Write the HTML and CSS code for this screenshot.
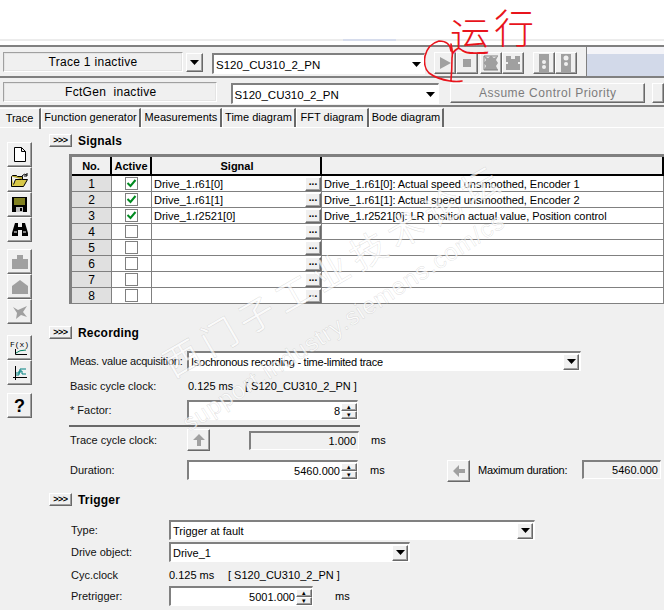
FILE: index.html
```html
<!DOCTYPE html>
<html lang="en">
<head>
<meta charset="utf-8">
<title>Trace</title>
<link rel="stylesheet" href="styles.css">
</head>
<body>
<div class="page">
  <div class="blank"></div>
  <div class="strip"></div>

  <div class="bar bar-one">
    <div class="status status-trace">Trace 1 inactive</div>
    <div class="btn drop-alone"><svg width="9" height="5" viewBox="0 0 9 5"><path d="M0 0h9L4.5 5z" fill="#000"/></svg></div>
    <div class="field combo combo-top"><span class="grow">S120_CU310_2_PN</span><span class="plain-arrow"><svg width="9" height="5" viewBox="0 0 9 5"><path d="M0 0h9L4.5 5z" fill="#000"/></svg></span></div>
    <div class="tools">
      <div class="btn tool"><svg width="14" height="14" viewBox="0 0 14 14"><path d="M2 1l11 6-11 6z" fill="#a0a0a0"/></svg></div>
      <div class="btn tool"><svg width="14" height="14" viewBox="0 0 14 14"><rect x="3" y="3" width="8" height="8" fill="#a0a0a0"/></svg></div>
      <div class="btn tool tool-gap"><svg width="16" height="16" viewBox="0 0 16 16"><path d="M1 1l4 2 3-2 3 2 4-2-2 4 2 3-2 3 2 4H1l2-4-2-3 2-3z" fill="#a0a0a0"/><path d="M1 1h14M1 15h14M1 1v14" stroke="#808080" fill="none"/></svg></div>
      <div class="btn tool"><svg width="16" height="16" viewBox="0 0 16 16"><path d="M1 1h14v14H1z" fill="#a0a0a0"/><path d="M6 1h4v3H6zM1 7h2v2H1zM13 7h2v2h-2z" fill="#f0f0f0"/></svg></div>
      <div class="btn tool light-a"><svg width="12" height="18" viewBox="0 0 12 18"><rect x="1" width="10" height="18" fill="#a0a0a0"/><circle cx="6" cy="8" r="2" fill="#f0f0f0"/><circle cx="6" cy="13" r="2" fill="#f0f0f0"/></svg></div>
      <div class="btn tool"><svg width="12" height="18" viewBox="0 0 12 18"><rect x="1" width="10" height="18" fill="#a0a0a0"/><circle cx="6" cy="4" r="2.500" fill="#f0f0f0"/><circle cx="6" cy="10" r="2" fill="#f0f0f0"/></svg></div>
    </div>
    <div class="bar-fill"></div>
  </div>

  <div class="bar bar-two">
    <div class="status status-fct">FctGen&nbsp; inactive</div>
    <div class="field combo combo-fct"><span class="grow">S120_CU310_2_PN</span><span class="plain-arrow"><svg width="9" height="5" viewBox="0 0 9 5"><path d="M0 0h9L4.5 5z" fill="#000"/></svg></span></div>
    <div class="btn assume">Assume Control Priority</div>
    <div class="btn assume-edge"></div>
  </div>

  <div class="tabs">
    <div class="tab tab-on">Trace</div>
    <div class="tab tab-fg">Function generator</div>
    <div class="tab tab-me">Measurements</div>
    <div class="tab tab-ti">Time diagram</div>
    <div class="tab tab-ff">FFT diagram</div>
    <div class="tab tab-bo">Bode diagram</div>
  </div>

  <div class="main">
    <aside class="side">
      <div class="btn side-btn"><svg width="14" height="15" viewBox="0 0 14 15"><path d="M1.500.5h7l4 4v10h-11zM8.500.5v4h4" fill="#fff" stroke="#000"/></svg></div>
      <div class="btn side-btn"><svg width="18" height="14" viewBox="0 0 18 14"><path d="M.5 3.500v10h12l4-7h-12l-2 5" fill="#d8c848" stroke="#000"/><path d="M.5 3.500l1-1h4l1 1h5v3" fill="#b8a830" stroke="#000"/><path d="M11 3q2-3 5-1M16 0v3h-3" fill="none" stroke="#000"/></svg></div>
      <div class="btn side-btn"><svg width="15" height="15" viewBox="0 0 15 15"><rect width="15" height="15" fill="#000"/><rect x="2" y="1" width="11" height="7" fill="#808020"/><rect x="4" y="10" width="7" height="5" fill="#c0c0c0"/><rect x="8" y="11" width="2" height="3" fill="#000"/></svg></div>
      <div class="btn side-btn"><svg width="16" height="13" viewBox="0 0 16 13"><path d="M3 0h3v4h4V0h3l3 10v3h-6V7H6v6H0v-3z" fill="#000"/><path d="M2 9h3M11 9h3" stroke="#fff"/></svg></div>
      <div class="side-gap-a"></div>
      <div class="btn side-btn"><svg width="16" height="14" viewBox="0 0 16 14"><path d="M5 0h6v4h5v10H0V4h5z" fill="#a0a0a0"/></svg></div>
      <div class="btn side-btn"><svg width="16" height="14" viewBox="0 0 16 14"><path d="M8 0l8 6v8H0V6z" fill="#a0a0a0"/></svg></div>
      <div class="btn side-btn"><svg width="16" height="14" viewBox="0 0 16 14"><path d="M1 2l5 3 9-4-4 6 4 5-6-2-5 4 1-6z" fill="#a0a0a0"/></svg></div>
      <div class="side-gap-b"></div>
      <div class="btn side-btn fx"><span class="fx-text">F(x)</span><svg width="14" height="6" viewBox="0 0 14 6"><path d="M2.500 0V5.500H14" fill="none" stroke="#000"/><path d="M3 4q3-3 10-3" fill="none" stroke="#008060"/></svg></div>
      <div class="btn side-btn"><svg width="14" height="14" viewBox="0 0 14 14"><path d="M2.500 0v14M0 11.500h14" stroke="#000" fill="none"/><path d="M3 9h3V5h3v3h4M3 7h4V3h6" stroke="#008080" fill="none"/></svg></div>
      <div class="side-gap-c"></div>
      <div class="btn side-btn help">?</div>
    </aside>

    <div class="content">
      <div class="sec-head sec-signals"><div class="btn more">&gt;&gt;&gt;</div><span class="sec-title">Signals</span></div>
      <div class="sig-table">
        <div class="sig-row sig-header">
          <div class="c-no">No.</div><div class="c-act">Active</div><div class="c-sig">Signal</div><div class="c-desc"></div>
        </div>
        <div class="sig-row"><div class="c-no">1</div><div class="c-act"><span class="check"><svg width="11" height="9" viewBox="0 0 11 9"><path d="M1.500 4l3 3 5-6" fill="none" stroke="#008a20" stroke-width="2"/></svg></span></div><div class="c-sig"><span class="grow">Drive_1.r61[0]</span><span class="btn dots">...</span></div><div class="c-desc">Drive_1.r61[0]: Actual speed unsmoothed, Encoder 1</div></div>
        <div class="sig-row"><div class="c-no">2</div><div class="c-act"><span class="check"><svg width="11" height="9" viewBox="0 0 11 9"><path d="M1.500 4l3 3 5-6" fill="none" stroke="#008a20" stroke-width="2"/></svg></span></div><div class="c-sig"><span class="grow">Drive_1.r61[1]</span><span class="btn dots">...</span></div><div class="c-desc">Drive_1.r61[1]: Actual speed unsmoothed, Encoder 2</div></div>
        <div class="sig-row"><div class="c-no">3</div><div class="c-act"><span class="check"><svg width="11" height="9" viewBox="0 0 11 9"><path d="M1.500 4l3 3 5-6" fill="none" stroke="#008a20" stroke-width="2"/></svg></span></div><div class="c-sig"><span class="grow">Drive_1.r2521[0]</span><span class="btn dots">...</span></div><div class="c-desc">Drive_1.r2521[0]: LR position actual value, Position control</div></div>
        <div class="sig-row"><div class="c-no">4</div><div class="c-act"><span class="check"></span></div><div class="c-sig"><span class="grow"></span><span class="btn dots">...</span></div><div class="c-desc"></div></div>
        <div class="sig-row"><div class="c-no">5</div><div class="c-act"><span class="check"></span></div><div class="c-sig"><span class="grow"></span><span class="btn dots">...</span></div><div class="c-desc"></div></div>
        <div class="sig-row"><div class="c-no">6</div><div class="c-act"><span class="check"></span></div><div class="c-sig"><span class="grow"></span><span class="btn dots">...</span></div><div class="c-desc"></div></div>
        <div class="sig-row"><div class="c-no">7</div><div class="c-act"><span class="check"></span></div><div class="c-sig"><span class="grow"></span><span class="btn dots">...</span></div><div class="c-desc"></div></div>
        <div class="sig-row"><div class="c-no">8</div><div class="c-act"><span class="check"></span></div><div class="c-sig"><span class="grow"></span><span class="btn dots">...</span></div><div class="c-desc"></div></div>
      </div>

      <div class="sec-head sec-recording"><div class="btn more">&gt;&gt;&gt;</div><span class="sec-title">Recording</span></div>

      <div class="form-row rec r-meas"><label class="lab lab-rec lab-meas">Meas. value acquisition:</label>
        <div class="field combo w-meas"><span class="grow tight">Isochronous recording - time-limited trace</span><span class="btn arrow"><svg width="9" height="5" viewBox="0 0 9 5"><path d="M0 0h9L4.5 5z" fill="#000"/></svg></span></div>
      </div>
      <div class="form-row rec r-basic"><label class="lab lab-rec">Basic cycle clock:</label><span class="val-ms">0.125 ms</span><span>[ S120_CU310_2_PN ]</span></div>
      <div class="form-row rec r-factor"><label class="lab lab-rec">* Factor:</label>
        <div class="field spin w-spin"><span class="grow num">8</span><span class="spinner"><span class="btn sp">▴</span><span class="btn sp">▾</span></span></div>
      </div>
      <div class="divider"></div>
      <div class="form-row rec r-trace"><label class="lab lab-rec">Trace cycle clock:</label>
        <div class="btn arrow-btn"><svg width="12" height="12" viewBox="0 0 12 12"><path d="M6 0l6 6H8v6H4V6H0z" fill="#a0a0a0"/></svg></div>
        <div class="field ro w-trace">1.000</div><span class="unit unit-trace">ms</span>
      </div>
      <div class="form-row rec r-dur"><label class="lab lab-rec">Duration:</label>
        <div class="field spin w-spin"><span class="grow num">5460.000</span><span class="spinner"><span class="btn sp">▴</span><span class="btn sp">▾</span></span></div>
        <span class="unit unit-dur">ms</span>
        <div class="btn arrow-btn arrow-left"><svg width="12" height="12" viewBox="0 0 12 12"><path d="M0 6l6-6v4h6v4H6v4z" fill="#a0a0a0"/></svg></div>
        <span class="max-lab">Maximum duration:</span>
        <div class="field ro w-max">5460.000</div>
      </div>

      <div class="sec-head sec-trigger"><div class="btn more">&gt;&gt;&gt;</div><span class="sec-title">Trigger</span></div>
      <div class="form-row trg r-type"><label class="lab lab-trg">Type:</label>
        <div class="field combo w-type"><span class="grow">Trigger at fault</span><span class="btn arrow"><svg width="9" height="5" viewBox="0 0 9 5"><path d="M0 0h9L4.5 5z" fill="#000"/></svg></span></div>
      </div>
      <div class="form-row trg r-drive"><label class="lab lab-trg">Drive object:</label>
        <div class="field combo w-drive"><span class="grow">Drive_1</span><span class="btn arrow"><svg width="9" height="5" viewBox="0 0 9 5"><path d="M0 0h9L4.5 5z" fill="#000"/></svg></span></div>
      </div>
      <div class="form-row trg r-cyc"><label class="lab lab-trg">Cyc.clock</label><span class="val-ms-t">0.125 ms</span><span>[ S120_CU310_2_PN ]</span></div>
      <div class="form-row trg r-pre"><label class="lab lab-trg">Pretrigger:</label>
        <div class="field spin w-pre"><span class="grow num">5001.000</span><span class="spinner"><span class="btn sp">▴</span><span class="btn sp">▾</span></span></div>
        <span class="unit unit-pre">ms</span>
      </div>
    </div>
  </div>

  <div class="mark mark-cn">西门子工业技术论坛</div>
  <div class="mark mark-en">support.industry.siemens.com/cs</div>

  <div class="note"><span class="note-a">运</span><span class="note-b">行</span></div>
  <svg class="ring" width="50" height="50" viewBox="0 0 50 50"><path d="M27 11Q26 1 15 1 4 4 1 16-1 27 5 33q8 6 21 8 7 1 12 0M27 4q2 8 1 14 0 12-1 22" fill="none" stroke="#e8141c" stroke-width="1.600" stroke-linecap="round"/></svg>
</div>
</body>
</html>
```

FILE: styles.css
```css
* { box-sizing: border-box; }
html, body { margin: 0; padding: 0; }
body { background: #f0f0f0; }
.page {
  position: relative;
  width: 664px;
  height: 610px;
  overflow: hidden;
  background: #f0f0f0;
  color: #000;
  font: 11px/14px "Liberation Sans", Arial, sans-serif;
}
.blank { height: 39px; background: #fff; }
.strip {
  height: 6px;
  background:
    linear-gradient(90deg, transparent 343px, #d6dcec 343px, #d6dcec 396px, transparent 396px) 0 0 / 100% 2px no-repeat,
    linear-gradient(#ececec 0 2px, #fff 2px);
}

.bar { display: flex; align-items: flex-start; border-top: 2px solid #808080; }
.bar-one { height: 31px; }
.bar-two { height: 29px; }

.btn {
  display: flex;
  align-items: center;
  justify-content: center;
  background: #f0f0f0;
  border: 1px solid;
  border-color: #fff #696969 #696969 #fff;
  box-shadow: inset -1px -1px 0 #a0a0a0;
}
.field {
  display: flex;
  align-items: center;
  background: #fff;
  border-style: solid;
  border-width: 2px 1px 1px 2px;
  border-color: #808080 #fff #fff #808080;
  white-space: nowrap;
}
.grow { flex: 1; min-width: 0; }
.num { text-align: right; }
.tight { letter-spacing: -.25px; }

.status {
  height: 20px;
  margin-left: 3px;
  text-align: center;
  font-size: 12px;
  line-height: 18px;
  letter-spacing: .3px;
  border: 1px solid;
  border-color: #a0a0a0 #fff #fff #a0a0a0;
  box-shadow: inset 0 0 0 1px #e4e4e4;
}
.status-trace { width: 180px; margin-top: 5px; }
.status-fct { width: 217px; margin-top: 4px; padding-left: 2px; }

.drop-alone { width: 17px; height: 19px; margin: 6px 0 0 3px; }
.combo-top { width: 213px; height: 21px; margin: 6px 0 0 9px; padding: 1px 0 0 2px; font-size: 11.500px; }
.combo-fct { width: 212px; height: 21px; margin: 5px 0 0 14px; padding: 1px 0 0 2px; font-size: 11.500px; }
.plain-arrow { width: 15px; display: flex; justify-content: center; }

.tools { display: flex; margin: 5px 0 0 9px; height: 22px; }
.tool { width: 22px; height: 22px; }
.tool-gap { margin-left: 2px; }
.light-a { margin-left: 9px; }
.bar-fill {
  flex: 1;
  height: 29px;
  margin-left: 9px;
  border-left: 1px solid #808080;
  background: linear-gradient(#f4f4f8 0 7px, #d2d9e9 7px);
}
.assume {
  width: 198px;
  height: 20px;
  margin: 5px 0 0 11px;
  color: #7c7c7c;
  font-size: 12px;
  letter-spacing: .5px;
}
.assume-edge { width: 12px; height: 20px; margin: 5px 0 0 7px; }

.tabs {
  display: flex;
  height: 23px;
  border-top: 2px solid #808080;
  padding-top: 1px;
  border-bottom: 1px solid #fff;
}
.tab {
  height: 19px;
  text-align: center;
  line-height: 17px;
  border-top: 1px solid #fff;
  border-right: 2px solid #696969;
  border-left: 1px solid #fff;
  white-space: nowrap;
}
.tab-on { width: 41px; height: 21px; line-height: 19px; border-left: 0; }
.tab-fg { width: 100px; }
.tab-me { width: 81px; }
.tab-ti { width: 74px; }
.tab-ff { width: 73px; }
.tab-bo { width: 75px; }

.main { display: flex; }
.side { width: 49px; padding: 14px 0 0 7px; }
.side-btn { width: 25px; height: 25px; }
.side-gap-a { height: 7px; }
.side-gap-b { height: 11px; }
.side-gap-c { height: 8px; }
.fx { flex-direction: column; }
.fx-text { font: 8px/8px "Liberation Mono", monospace; }
.help { font-size: 18px; font-weight: 700; }

.content { flex: 1; min-width: 0; }
.sec-head { display: flex; align-items: center; height: 13px; }
.sec-signals { margin-top: 6px; }
.sec-recording { margin-top: 22px; }
.sec-trigger { margin-top: 11px; }
.more { width: 23px; height: 13px; font-size: 9px; font-weight: 700; line-height: 9px; letter-spacing: -.5px; }
.sec-title { margin-left: 6px; font-size: 12px; font-weight: 700; letter-spacing: .2px; }

.sig-table {
  margin: 7px 0 0 20px;
  border-style: solid;
  border-width: 3px 0 0 3px;
  border-color: #808080;
  background: #fff;
}
.sig-row {
  display: grid;
  grid-template-columns: 40px 40px 170px 1fr;
  height: 16px;
  border-bottom: 1px solid #808080;
}
.sig-row > div { border-right: 1px solid #808080; display: flex; align-items: center; white-space: nowrap; }
.sig-header { height: 19px; background: #f0f0f0; border-bottom: 2px solid #000; font-weight: 700; font-size: 11px; }
.sig-header > div { justify-content: center; border-right: 2px solid #000; }
.c-no { justify-content: center; background: #e0e0e0; font-size: 12px; }
.sig-header .c-no { background: #f0f0f0; font-size: 11px; }
.c-act { justify-content: center; }
.c-sig { padding-left: 2px; }
.c-desc { padding-left: 2px; letter-spacing: -.05px; }
.check {
  width: 13px;
  height: 13px;
  display: flex;
  align-items: center;
  justify-content: center;
  background: #fff;
  border: 1px solid #808080;
}
.dots { width: 16px; height: 14px; font-weight: 700; font-size: 10px; line-height: 6px; padding-bottom: 3px; }

.form-row { display: flex; align-items: center; white-space: nowrap; font-size: 11px; }
.rec { margin-left: 21px; }
.trg { margin-left: 22px; }
.lab { flex: none; color: #111; }
.lab-rec { width: 117px; }
.lab-trg { width: 98px; }
.lab-meas { letter-spacing: -.2px; }
.r-meas { height: 20px; margin-top: 12px; }
.r-basic { height: 16px; margin-top: 7px; }
.r-factor { height: 20px; margin-top: 6px; }
.r-trace { height: 22px; margin-top: 2px; }
.r-dur { height: 22px; margin-top: 9px; align-items: flex-start; }
.r-dur .lab, .r-dur .unit, .r-dur .max-lab { line-height: 20px; }
.r-type { height: 20px; margin-top: 14px; }
.r-drive { height: 20px; margin-top: 2px; }
.r-cyc { height: 16px; margin-top: 5px; }
.r-pre { height: 20px; margin-top: 3px; }

.combo { padding-left: 2px; }
.w-meas { width: 394px; height: 20px; }
.w-type { width: 366px; height: 20px; }
.w-drive { width: 241px; height: 20px; }
.arrow { width: 16px; height: 16px; margin-right: 1px; }
.val-ms { width: 58px; padding-left: 1px; }
.val-ms-t { width: 59px; }

.spin { padding-left: 2px; }
.w-spin { width: 171px; height: 20px; }
.w-pre { width: 144px; height: 20px; }
.spinner { display: flex; flex-direction: column; width: 16px; flex: none; height: 16px; margin-left: 1px; }
.sp { height: 8px; font-size: 7px; line-height: 6px; overflow: hidden; }

.divider { width: 291px; height: 2px; margin: 5px 0 0 20px; background: #696969; }
.arrow-btn { width: 23px; height: 22px; }
.field.ro {
  display: block;
  text-align: right;
  background: #f0f0f0;
  padding-right: 2px;
  line-height: 16px;
}
.w-trace { width: 110px; height: 19px; margin-left: 39px; }
.unit { flex: none; width: 14px; }
.unit-trace { margin-left: 12px; }
.unit-dur { margin-left: 12px; }
.arrow-left { margin-left: 63px; }
.max-lab { margin-left: 8px; width: 104px; flex: none; letter-spacing: -.25px; }
.w-max { width: 79px; height: 19px; }
.unit-pre { margin-left: 22px; }

.mark {
  position: absolute;
  pointer-events: none;
  white-space: nowrap;
  color: rgba(255,255,255,.7);
  -webkit-text-stroke: .5px rgba(110,110,110,.22);
  transform-origin: left center;
}
.mark-cn { left: 165px; top: 340px; font: 36px/50px "Noto Sans CJK SC", sans-serif; letter-spacing: 7px; transform: rotate(-30deg); }
.mark-en { left: 185px; top: 408px; font: 24px/34px "Liberation Sans", sans-serif; letter-spacing: 1px; transform: rotate(-33deg); }

.note {
  position: absolute;
  left: 450px;
  top: 0;
  color: #e8141c;
  font: 200 40px/60px "Noto Sans CJK SC", sans-serif;
  white-space: nowrap;
}
.note-a { display: inline-block; margin-top: 4px; }
.note-b { display: inline-block; margin-left: 4px; position: relative; top: -8px; }
.ring { position: absolute; left: 424px; top: 40px; }
```
